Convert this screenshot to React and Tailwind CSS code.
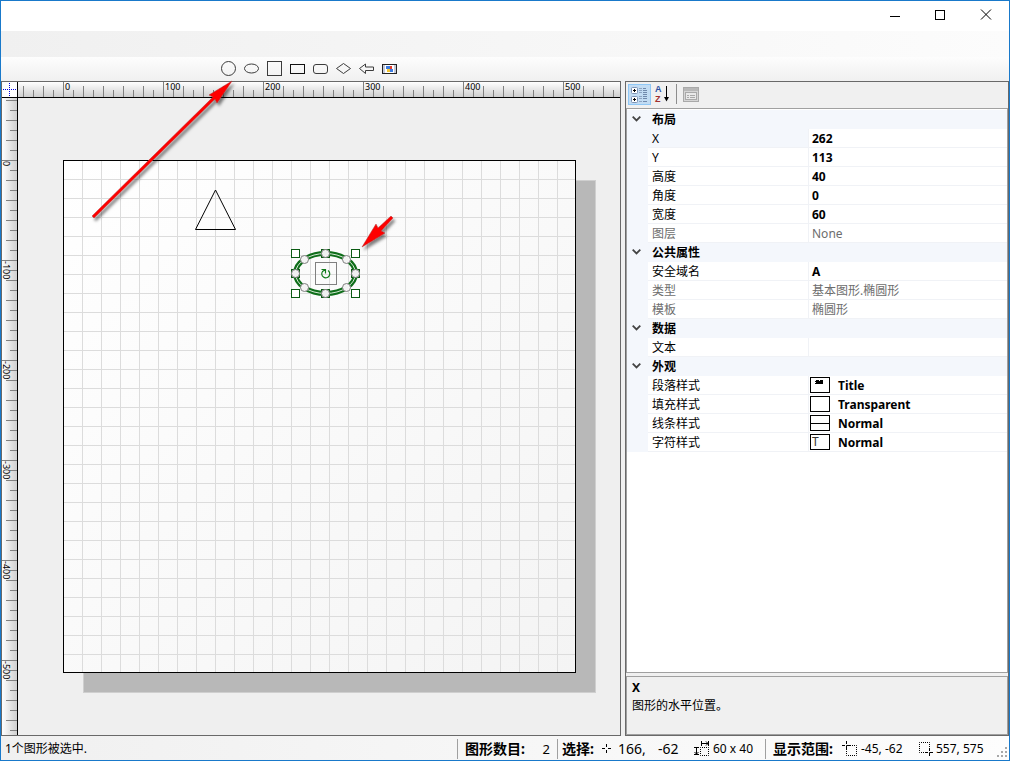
import React, { useState, useEffect } from 'react';

const tools = [
    { name: 'Circle', shape: <circle cx="8.5" cy="8.5" r="7" /> },
    { name: 'Ellipse', shape: <ellipse cx="8.5" cy="8.5" rx="7" ry="4.5" /> },
    { name: 'Square', shape: <rect x="1.5" y="1.5" width="14" height="14" /> },
    { name: 'Rectangle', shape: <rect x="1.5" y="4.5" width="14" height="9" stroke="#111" /> },
    { name: 'Rounded rectangle', shape: <rect x="1.5" y="4.5" width="14" height="9" rx="2.5" /> },
    { name: 'Diamond', shape: <path d="M1.5 8.5 8.5 3.5 15.5 8.5 8.5 13.5Z" /> },
    { name: 'Arrow', shape: <path d="M1.5 8.5 7.5 4V7H15.5V10.5H7.5V13.5Z" /> },
    {
        name: 'Picture',
        shape: (
            <>
                <rect x="1.5" y="4.5" width="14" height="9" fill="#c3c8d6" stroke="#222" />
                <path d="M4 5h9v8h-9z" fill="#fff" stroke="none" />
                <path d="M5 6h4v3H5zM9 9h3v3H9z" fill="#3a7be0" stroke="none" />
                <path d="M9 6h2v3H9z" fill="#e23c2c" stroke="none" />
                <path d="M6 9h3v3H6z" fill="#f3c430" stroke="none" />
            </>
        ),
    },
];

const groups = [
    {
        title: '布局',
        rows: [
            { label: 'X', value: '262', selected: true },
            { label: 'Y', value: '113' },
            { label: '高度', value: '40' },
            { label: '角度', value: '0' },
            { label: '宽度', value: '60' },
            { label: '图层', value: 'None', readOnly: true },
        ],
    },
    {
        title: '公共属性',
        rows: [
            { label: '安全域名', value: 'A' },
            { label: '类型', value: '基本图形.椭圆形', readOnly: true },
            { label: '模板', value: '椭圆形', readOnly: true },
        ],
    },
    { title: '数据', rows: [{ label: '文本', value: '' }] },
    {
        title: '外观',
        rows: [
            { label: '段落样式', value: 'Title', swatch: 'paragraph' },
            { label: '填充样式', value: 'Transparent', swatch: 'fill' },
            { label: '线条样式', value: 'Normal', swatch: 'line' },
            { label: '字符样式', value: 'Normal', swatch: 'char' },
        ],
    },
];

const TitleBar = () => (
    <div className="flex h-[30px] shrink-0 justify-end bg-white pb-0.5">
        <button type="button" aria-label="Minimize" className="flex w-[45px] items-center justify-center">
            <svg width="11" height="11" stroke="#000" fill="none"><path d="M0 6.5h10" /></svg>
        </button>
        <button type="button" aria-label="Maximize" className="flex w-[45px] items-center justify-center">
            <svg width="11" height="11" stroke="#000" fill="none"><rect x=".5" y=".5" width="9" height="9" /></svg>
        </button>
        <button type="button" aria-label="Close" className="flex w-[46px] items-center justify-center">
            <svg width="12" height="12" stroke="#000" fill="none"><path d="M1 .5l10 10M11 .5l-10 10" /></svg>
        </button>
    </div>
);

const ShapeBar = () => (
    <div className="flex h-6 shrink-0 items-center bg-linear-to-b from-[#fdfdfd] to-[#f0f0f0] pb-0.5 pl-[216px]">
        {tools.map((tool) => (
            <button key={tool.name} type="button" aria-label={tool.name} className="flex w-[23px] items-center justify-center">
                <svg width="17" height="17" fill="none" stroke="#3c3c3c">{tool.shape}</svg>
            </button>
        ))}
    </div>
);

const range = (from, to) => {
    const list = [];
    for (let v = from; v <= to; v += 10) list.push(v);
    return list;
};

const tickStart = (v) => {
    if (v % 100 === 0) return 0;
    return v % 20 === 0 ? 4 : 8;
};

// zero sits 45px into the horizontal ruler and 62px into the vertical one
const HorizontalRuler = ({ max }) => (
    <svg className="h-[15px] w-full overflow-visible text-[9px]">
        {range(-40, max).map((v) => (
            <path key={v} d={`M${v + 45.5} ${tickStart(v)}V15`} stroke="#808080" />
        ))}
        {range(0, max - 20).filter((v) => v % 100 === 0).map((v) => (
            <text key={v} x={v + 47} y="8">{v}</text>
        ))}
    </svg>
);

const VerticalRuler = ({ max }) => (
    <svg className="h-full w-[15px] overflow-visible text-[9px]">
        {range(-60, max).map((v) => (
            <path key={v} d={`M${tickStart(v)} ${v + 62.5}H15`} stroke="#808080" />
        ))}
        {range(0, max - 20).filter((v) => v % 100 === 0).map((v) => (
            <text key={v} transform={`translate(1 ${v + 63}) rotate(90)`}>{-v}</text>
        ))}
    </svg>
);

const Selection = () => {
    const corners = [[-30, -20], [30, -20], [-30, 20], [30, 20]];
    const sides = [[0, -20], [30, 0], [0, 20], [-30, 0]];
    const diagonals = [[-21, -14], [21, -14], [-21, 14], [21, 14]];

    return (
        <g transform="translate(307.5 175.5)" fill="none">
            <ellipse rx="30" ry="20" stroke="#0f6e1a" strokeWidth="5" />
            <ellipse rx="30" ry="20" stroke="#d5ead5" strokeWidth="1" />
            {corners.map(([x, y]) => (
                <rect key={`${x},${y}`} x={x - 4} y={y - 4} width="8" height="8" fill="#fff" stroke="#0a5a12" />
            ))}
            {sides.map(([x, y]) => (
                <g key={`${x},${y}`}>
                    <rect x={x - 4} y={y - 4} width="8" height="8" fill="#dfe9df" stroke="#0a5a12" />
                    <circle cx={x} cy={y} r="4" fill="#f0f0f0" stroke="#808080" />
                </g>
            ))}
            {diagonals.map(([x, y]) => (
                <circle key={`${x},${y}`} cx={x} cy={y} r="4" fill="#f4f4f4" stroke="#808080" />
            ))}
            <rect x="-10" y="-11" width="21" height="22" stroke="#808080" />
            <path d="M2.5-3A4 4 0 1 1-3-2L0-4M-4-4H0V0" stroke="#0f7a1a" strokeWidth="1.2" />
        </g>
    );
};

const DrawingArea = () => (
    <svg className="block h-full w-full bg-[#efefef]">
        <defs>
            <pattern id="grid" x="45" y="62" width="19" height="19" patternUnits="userSpaceOnUse">
                <path d="M.5 0V19M0 .5H19" stroke="#dcdcdc" />
            </pattern>
            <linearGradient id="paper" x1="0" y1="0" x2="1" y2="1">
                <stop offset="0" stopColor="#fff" />
                <stop offset="1" stopColor="#f4f4f4" />
            </linearGradient>
        </defs>
        <rect x="65.5" y="82.5" width="512" height="512" fill="#b8b8b8" stroke="#cfcfcf" />
        <rect x="45.5" y="62.5" width="512" height="512" fill="url(#paper)" />
        <rect x="45.5" y="62.5" width="512" height="512" fill="url(#grid)" stroke="#000" />
        <path d="M197.5 92 217.5 131.5H177.5Z" fill="none" stroke="#000" />
        <Selection />
    </svg>
);

const Canvas = () => {
    const [size, setSize] = useState({ width: window.innerWidth, height: window.innerHeight });

    useEffect(() => {
        const onResize = () => setSize({ width: window.innerWidth, height: window.innerHeight });
        window.addEventListener('resize', onResize);
        return () => window.removeEventListener('resize', onResize);
    }, []);

    return (
        <section className="grid min-w-0 flex-1 grid-cols-[16px_1fr] grid-rows-[16px_1fr] border border-[#696969]">
            <div className="border-r border-b border-black bg-white">
                <svg width="15" height="15" stroke="#0000e0" strokeDasharray="1 1">
                    <path d="M1 7.5H14M7.5 1V14" />
                </svg>
            </div>
            <div className="min-w-0 border-b border-black bg-linear-to-b from-white to-[#cfcfcf]">
                <HorizontalRuler max={size.width - 455} />
            </div>
            <div className="min-h-0 border-r border-black bg-linear-to-r from-white to-[#cfcfcf]">
                <VerticalRuler max={size.height - 188} />
            </div>
            <div className="overflow-hidden">
                <DrawingArea />
            </div>
        </section>
    );
};

const Swatch = ({ kind }) => (
    <svg width="20" height="16" fill="none" stroke="#000" className="shrink-0">
        <rect x=".5" y=".5" width="19" height="15" fill="#fff" />
        {kind === 'paragraph' && <path d="M6 3.5h3M10 3.5h3M5 4.5h8M6 5.5h7M5 6.5h8" />}
        {kind === 'line' && <path d="M0 8.5H20" />}
        {kind === 'char' && <text x="2" y="12" className="text-xs font-normal" fill="#333" stroke="none">T</text>}
    </svg>
);

const PropertyRow = ({ row }) => (
    <tr className={row.readOnly ? 'text-[#6d6d6d]' : 'text-black'}>
        <td className="bg-[#f4f7fc]" />
        <th
            scope="row"
            className={`border-r border-b border-[#f0f2f6] pt-px pl-1 text-left font-normal ${row.selected ? 'bg-[#f4f7fc]' : 'bg-white'}`}
        >
            {row.label}
        </th>
        <td className={`border-b border-[#f0f2f6] pt-px ${row.swatch ? 'pl-px' : 'pl-[3px]'} ${row.readOnly ? '' : 'font-bold'}`}>
            {row.swatch ? (
                <span className="flex h-[17px] items-start gap-2">
                    <Swatch kind={row.swatch} />
                    {row.value}
                </span>
            ) : row.value}
        </td>
    </tr>
);

const PropertyGroup = ({ group }) => {
    const [open, setOpen] = useState(true);

    return (
        <tbody>
            <tr className="bg-[#f4f7fc]">
                <td>
                    <button
                        type="button"
                        aria-label={group.title}
                        aria-expanded={open}
                        onClick={() => setOpen(!open)}
                        className="flex h-[19px] w-full items-center justify-center pr-0.5 pb-0.5"
                    >
                        <svg width="9" height="6" fill="none" stroke="#444" strokeWidth="1.8">
                            <path d="M.7.7 4.5 4.5 8.3.7" />
                        </svg>
                    </button>
                </td>
                <th scope="colgroup" colSpan={2} className="pl-1 text-left font-bold">{group.title}</th>
            </tr>
            {open && group.rows.map((row) => <PropertyRow key={row.label} row={row} />)}
        </tbody>
    );
};

const PropertyPanel = () => (
    <aside className="flex w-96 shrink-0 flex-col border border-[#696969] bg-[#f0f0f0]">
        <div className="flex h-[26px] shrink-0 items-center gap-1 pb-0.5 pl-0.5">
            <button type="button" aria-label="Categorized" className="flex h-[21px] w-[23px] items-center justify-center border border-[#90c8f6] bg-[#c2dcf3]">
                <svg width="17" height="17" fill="none">
                    <rect x=".5" y="1.5" width="6" height="6" rx="1" fill="#fff" stroke="#7c93b5" />
                    <rect x=".5" y="10.5" width="6" height="6" rx="1" fill="#fff" stroke="#7c93b5" />
                    <path d="M2 4.5h3M3.5 3v3M2 13.5h3M3.5 12v3" stroke="#000" />
                    <path d="M8 2.5h3M8 4.5h3M8 6.5h3M8 10.5h3M8 12.5h3M8 15.5h3" stroke="#8ea4c2" />
                    <path d="M12 2.5h3M12 4.5h4M12 6.5h4M12 8.5h4M12 10.5h4M12 12.5h4M12 15.5h4" stroke="#7089ab" />
                </svg>
            </button>
            <button type="button" aria-label="Alphabetical" className="flex h-[21px] w-4 items-center">
                <svg width="16" height="18" className="overflow-visible font-['Liberation_Sans',sans-serif] text-[9px] font-bold">
                    <text x="0" y="7" fill="#2b4fa0">A</text>
                    <text x="0" y="17" fill="#a03030">Z</text>
                    <path d="M11.5 1V13" stroke="#000" fill="none" />
                    <path d="M9 12h5L11.5 16.5Z" fill="#000" />
                </svg>
            </button>
            <div className="ml-px h-5 w-px bg-[#8d8d8d]" />
            <button type="button" aria-label="Property pages" disabled className="flex h-[21px] w-5 items-center justify-center">
                <svg width="16" height="15" fill="none" stroke="#a9a9a9">
                    <rect x=".5" y=".5" width="15" height="14" fill="#d6d6d6" />
                    <path d="M1 2.5H15" stroke="#b8b8b8" strokeWidth="3" />
                    <rect x="2.5" y="5.5" width="11" height="7" fill="#e9e9e9" />
                    <path d="M4 8.5h2M7 8.5h5M4 10.5h2M7 10.5h5" />
                </svg>
            </button>
        </div>

        <div className="min-h-0 flex-1 overflow-hidden border border-[#a0a0a0] bg-white pt-px">
            <table className="w-full table-fixed border-separate border-spacing-0 text-xs leading-[17px]">
                <colgroup>
                    <col className="w-[21px]" />
                    <col className="w-[161px]" />
                    <col />
                </colgroup>
                {groups.map((group) => <PropertyGroup key={group.title} group={group} />)}
            </table>
        </div>

        <div className="mt-[3px] h-[59px] shrink-0 border border-[#a0a0a0] px-[5px] py-0.5 text-xs leading-[18px]">
            <h2 className="font-bold">X</h2>
            <p>图形的水平位置。</p>
        </div>
    </aside>
);

const StatusBar = () => (
    <footer className="flex h-6 shrink-0 items-center bg-linear-to-r from-[#f0f0f0] to-[#fdfdfd] pt-0.5 text-xs">
        <span className="flex-1 pl-1">1个图形被选中.</span>
        <div className="flex w-[100px] items-center justify-between border-l border-[#a0a0a0] px-[7px] leading-5">
            <span className="text-sm font-bold">图形数目:</span>
            <span className="text-[13px]">2</span>
        </div>
        <div className="flex w-[208px] items-center border-l border-[#a0a0a0] pl-1 leading-5">
            <span className="w-10 text-sm font-bold">选择:</span>
            <svg width="10" height="10" stroke="#000"><path d="M0 4.5H3M6 4.5H9M4.5 0V3M4.5 6V9" /></svg>
            <span className="ml-[6px] w-10 text-sm">166,</span>
            <span className="w-9 text-sm">-62</span>
            <svg width="17" height="16" fill="none" stroke="#000">
                <path d="M7.5 0V5M14.5 0V5M8 2.5H14M12 .5 14 2.5 12 4.5M0 6.5H5M0 13.5H5M2.5 7V13M.5 11 2.5 13 4.5 11" />
                <path d="M6.5 6.5H14.5V14.5H6.5Z" strokeDasharray="1 1" strokeDashoffset=".5" />
            </svg>
            <span className="ml-0.5">60 x 40</span>
        </div>
        <div className="flex w-[244px] items-center border-l border-[#a0a0a0] pl-[7px] leading-5">
            <span className="w-[69px] text-sm font-bold">显示范围:</span>
            <svg width="16" height="16" fill="none" stroke="#000">
                <path d="M0 4.5H3M5 4.5H8M4.5 0V3M4.5 5V8" />
                <path d="M4.5 4.5H14.5V14.5H4.5Z" strokeDasharray="1 1" strokeDashoffset=".5" />
            </svg>
            <span className="ml-[3px] w-[57px]">-45, -62</span>
            <svg width="16" height="16" fill="none" stroke="#000">
                <path d="M1.5 1.5H11.5V11.5H1.5Z" strokeDasharray="1 1" strokeDashoffset=".5" />
                <path d="M7 11.5H10M12 11.5H15M11.5 7V10M11.5 12V15" />
            </svg>
            <span className="ml-0.5">557, 575</span>
            <svg width="12" height="12" fill="#a8a8a8" className="ml-auto self-end">
                <path d="M8 0h2v2h-2zM4 4h2v2h-2zM8 4h2v2h-2zM0 8h2v2h-2zM4 8h2v2h-2zM8 8h2v2h-2z" />
            </svg>
        </div>
    </footer>
);

// red callout arrows drawn over the window
const Arrows = () => (
    <svg className="pointer-events-none absolute top-0 left-0" width="420" height="270">
        <defs>
            <filter id="arrowShadow" x="-20%" y="-20%" width="150%" height="150%">
                <feDropShadow dx="2" dy="3" stdDeviation="1.8" floodColor="#000" floodOpacity="0.5" />
            </filter>
        </defs>
        <g filter="url(#arrowShadow)" fill="#f00" stroke="#b03030" strokeWidth=".5">
            <path d="M91 215 212 96 208 94 231 80 216 102 214 98 93 217Z" />
            <path d="M361 246 375 223 377 227 390 215 392 217 380 230 384 232Z" />
        </g>
    </svg>
);

const App = () => {
    return (
        <div className="relative flex h-screen flex-col overflow-hidden border border-[#1979ca] bg-[#f0f0f0] font-['Noto_Sans','Noto_Sans_CJK_SC',sans-serif] text-black">
            <TitleBar />
            <div className="h-[26px] shrink-0 bg-linear-to-r from-[#f0f0f0] to-[#fcfcfc]" />
            <ShapeBar />
            <main className="flex min-h-0 flex-1 gap-1">
                <Canvas />
                <PropertyPanel />
            </main>
            <StatusBar />
            <Arrows />
        </div>
    );
};

export default App;
